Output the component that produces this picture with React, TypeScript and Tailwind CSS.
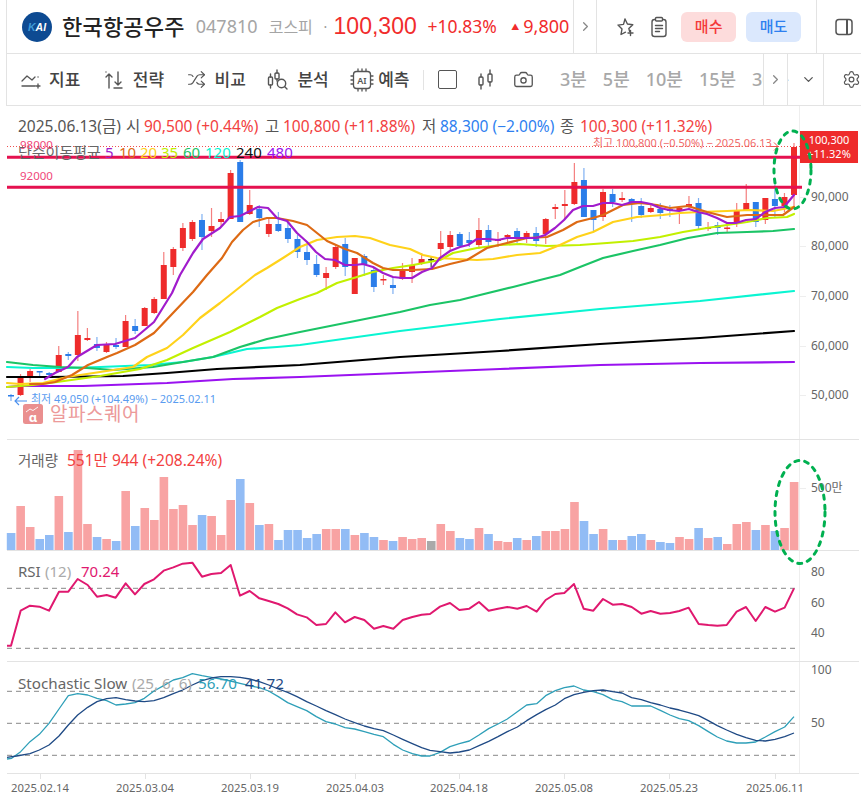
import { Shuffle, Camera, Settings, ChevronRight, ChevronDown } from "lucide-react";

const z = (s: string, ox: number, oy: number) =>
  s.trim().split(/\s+/).map((p) => { const [a, b] = p.split(",").map(Number); return `${ox + a / 3},${oy + b / 3}`; }).join(" ");

// bodyTop, bodyBottom, wickTop, wickBottom, colour
const candles: [number, number, number, number, number][] = [
  [395,396.5,394,401,1],[376,395,374,396,0],[371,378,369,382,0],[371,372.5,371,377,1],[373,375,372,378,1],[355,372,346,372,0],[354,356,352,360,1],[335,355,311,361,0],[338,340,328,341,0],[344,348,337,351,1],
  [344,352,342,353,0],[345,347,338,349,1],[321,347,315,347,0],[326,331,319,334,1],[308,326,307,326,0],[299,313,297,314,0],[265,299,252,299,0],[249,267,247,275,0],[228,248,223,251,0],[222,239,220,241,0],
  [220,237,214,250,1],[226,231,208,237,0],[219,222,212,227,0],[173,219,170,219,0],[162,222,160,222,1],[205,214,190,215,0],[209,218,205,227,1],[224,234,218,237,0],[224,231,212,232,1],[228,239,222,243,1],
  [239,252,235,258,1],[252,260,245,265,1],[264,275,255,277,1],[273,278,267,290,0],[247,267,245,269,0],[244,267,238,276,1],[258,294,258,294,0],[256,264,254,276,1],[270,287,267,292,1],[279,280.5,275,285,0],
  [285,288,277,294,1],[271,279,263,280,0],[265,272,258,283,0],[259,263,253,265,0],[259,260,256,267,2],[243,249,231,258,0],[235,247,231,250,0],[234,246,232,246,1],[240,243,232,247,1],[230,245,218,249,0],
  [230,242,225,247,1],[239,241,232,247,0],[235,237,234,243,0],[231,238,228,243,1],[233,239,231,243,0],[233,241,227,247,1],[219,234,218,244,0],[207,209,204,219,0],[204,206,190,219,0],[182,204,163,205,0],
  [180,217,168,217,1],[210,220,210,232,1],[192,217,189,221,0],[194,202,189,207,1],[198,200,192,202,0],[199,204,198,222,1],[206,215,198,218,1],[208,212,205,213,0],[209,213,203,219,1],[209,211,205,217,1],
  [208,210,206,224,0],[204,206,196,208,0],[203,226,198,229,1],[227.5,229,222,231,0],[225,228,222,235,1],[227.5,229,222,232,0],[211,222,203,227,0],[203,210,184,211,0],[202,222,202,227,1],[198,220,198,224,0],
  [199,206,185,217,1],[197,206,193,212,0],[147,195,143,207,0],
];
const colr = ["#ee2b2b", "#2b7de9", "#222222"];
const wick = ["#f47f7f", "#7fb0f2", "#444444"];
const vcol = ["#f8a3a3", "#92bcf5", "#a9a9a9"];

const vols: [number, number][] = [
  [279,1],[198,0],[261,0],[297,1],[285,1],[168,0],[276,1],[30,0],[252,0],[291,1],[297,0],[303,1],[153,0],[258,1],[204,0],[240,0],[111,0],[207,0],[195,0],[255,0],[225,1],[228,0],[285,0],[180,0],[117,1],[189,0],[255,1],[252,0],[300,1],[270,1],[270,1],[294,1],[282,1],[267,0],[267,0],[267,1],[285,0],[279,1],[291,1],[300,0],[303,1],[291,0],[297,0],[294,0],[303,2],
  [252,0],[273,0],[294,1],[297,1],[264,0],[282,1],[303,0],[306,0],[294,1],[300,0],[288,1],[273,0],[273,0],[267,0],[186,0],[243,1],[282,1],[267,0],[300,1],[300,0],[288,1],[282,1],[300,0],[306,1],[309,1],[291,0],[297,0],[264,1],[294,0],[291,1],[312,0],[252,0],[246,0],[270,1],[255,0],[273,1],[264,0],[126,0],
];
const cx = (i: number) => 11 + (783 / 82) * i;

const ma5 = "45,379 55,373 68,367 77,357 97,345 115,344 135,338 154,322 172,293 180,275 193,253 203,239 220,228 230,217 240,216 250,211 258,207 268,208 277,218 287,221 297,233 307,242 316,252 325,259 335,260 345,265 355,265 363,264 373,267 383,273 393,277 402,278 412,278 422,272 432,268 440,258 450,251 460,247 468,245 477,239 488,239 498,240 507,238 517,238 527,238 536,238 545,235 555,228 564,220 573,210 583,206 593,206 603,203 613,203 622,205 632,202 641,202 651,204 660,208 669,210 679,211 689,209 698,212 707,214 717,218 727,223 736,223 746,220 756,219 765,212 775,208 784,207 794,195";
const ma10 = "30,384 43,384 55,382 72,375 88,365 107,357 117,353 135,345 154,333 173,313 193,292 207,275 222,258 232,242 243,230 253,222 267,218 277,218 293,221 307,225 317,233 327,241 345,249 357,253 373,263 383,268 393,270 412,270 432,269 450,264 467,260 487,248 507,243 527,238 547,237 563,230 577,222 593,218 603,215 623,205 640,203 657,205 670,208 688,206 707,212 727,217 747,215 763,215 783,215 794,207";
const ma20 = "7,383 20,384 43,383 67,377 100,372 133,367 147,357 167,348 183,335 200,318 220,303 240,287 255,275 267,268 283,258 300,247 317,240 337,237 355,236 370,238 390,245 410,249 423,255 437,258 457,259 477,260 493,259 517,255 540,253 560,245 577,237 593,232 613,222 637,217 663,215 680,213 700,212 727,211 750,210 773,211 794,207";
const ma35 = "7,387 33,385 57,382 100,376 140,369 167,360 193,348 230,332 260,317 277,308 300,299 317,293 337,283 357,277 373,272 393,268 413,265 440,260 453,253 477,248 500,245 520,244 547,246 580,245 607,243 633,241 660,237 683,232 707,228 727,225 747,222 767,218 787,217 794,214";
const ma60 = "7,362 33,365 60,367 87,368 113,370 153,367 183,362 213,357 240,347 267,339 300,332 350,322 400,312 430,305 460,300 480,295 513,287 540,280 560,275 580,267 603,258 633,251 660,245 688,238 717,233 747,232 773,231 794,229";
const ma120 = "7,367 33,368 67,368 100,367 150,365 183,362 213,357 247,349 277,347 300,345 400,331 500,319 600,309 700,301 794,291";
const ma240 = "7,377 50,377 123,376 167,373 217,369 300,365 400,357 500,351 600,344 700,338 794,331";
const ma480 = "7,387 20,386 83,386 167,383 233,379 300,377 400,373 500,369 600,365 700,363 794,362";

const rsi = z("21,272 33,272 62,167 90,152 118,155 147,167 177,110 205,110 233,72 263,90 291,125 320,120 347,128 377,85 405,118 433,87 462,73 491,47 520,37 548,26 577,23 606,65 634,57 663,54 692,30 720,122 749,108 778,130 806,138 835,147 863,160 891,178 920,187 949,210 978,207 1006,172 1035,202 1064,186 1093,195 1122,221 1150,213 1180,221 1208,195 1237,186 1265,179 1290,177", 0, 555) + " " +
  z("30,155 60,144 88,165 118,161 147,141 176,167 204,161 232,156 262,161 290,153 320,170 347,135 376,117 403,114 432,87 461,161 490,167 519,132 548,149 576,147 605,156 634,176 662,168 691,176 720,174 748,168 776,158 806,207 835,210 862,212 890,210 920,170 948,156 977,198 1006,156 1035,170 1064,158 1092,100", 430, 555);
const stK = z("21,612 35,610 62,590 90,560 118,538 147,505 177,462 205,422 233,416 263,420 291,430 320,437 348,450 377,447 405,443 433,430 462,408 491,392 520,375 548,368 577,356 606,362 634,367 663,372 692,378 720,385 749,392 778,398 806,408 835,425 863,443 891,455 920,467 949,485 978,500 1006,507 1035,518 1064,522 1093,530 1122,538 1150,545 1180,568 1208,585 1237,596 1265,603 1290,603", 0, 555) + " " +
  z("30,592 60,575 88,566 118,558 147,540 176,521 204,507 232,492 262,470 290,450 320,446 347,422 376,407 403,398 432,393 461,405 490,410 519,419 548,434 576,440 605,453 634,453 662,453 691,466 720,480 748,491 776,497 806,512 835,530 862,546 890,558 920,564 948,564 977,561 1006,546 1035,530 1064,516 1092,485", 430, 555);
const stD = z("21,607 50,603 90,596 118,585 147,570 177,543 205,510 233,480 263,457 291,440 320,431 348,428 377,434 405,438 433,440 462,437 491,428 520,416 548,405 577,390 606,377 634,369 663,365 692,365 720,367 749,372 778,380 806,390 835,402 863,412 891,425 920,440 949,453 978,467 1006,479 1035,492 1064,503 1093,513 1122,521 1150,527 1180,540 1208,553 1237,566 1265,578 1290,586", 0, 555) + " " +
  z("30,590 60,594 88,591 118,585 147,572 176,559 204,545 232,530 262,516 290,497 320,479 347,464 376,450 403,431 432,419 461,412 490,407 519,405 548,410 576,414 605,428 634,434 662,443 691,450 720,459 748,465 776,473 806,482 835,497 862,512 890,525 920,538 948,548 977,556 1006,558 1035,553 1064,545 1092,534", 430, 555);

const dates = [["2025.02.14", 40], ["2025.03.04", 145], ["2025.03.19", 250], ["2025.04.03", 355], ["2025.04.18", 459], ["2025.05.08", 564], ["2025.05.23", 669], ["2025.06.11", 775]] as const;

const Ic = "text-[#555] shrink-0";

function Tool({ icon, label, w }: { icon: React.ReactNode; label: string; w: string }) {
  return (
    <div className={`flex items-center ${w}`}>
      {icon}
      <span className="text-[17px] font-medium text-[#444] whitespace-nowrap">{label}</span>
    </div>
  );
}

function YLabel({ top, text }: { top: string; text: string }) {
  return (
    <div className={`absolute left-0 ${top} flex items-center`}>
      <span className="w-[6px] h-px bg-[#eeeeee]" />
      <span className="ml-[5px] text-[12px] leading-[14px] text-[#666] whitespace-nowrap">{text}</span>
    </div>
  );
}

export default function App() {
  return (
    <div className="relative w-[861px] h-[797px] overflow-hidden bg-white flex flex-col font-['Noto_Sans','Noto_Sans_CJK_KR',sans-serif]">
      {/* header */}
      <div className="h-[54px] ml-[6px] border-l border-b border-[#e3e3e3] flex items-center shrink-0">
        <svg width="30" height="30" viewBox="0 0 30 30" className="ml-[15px] shrink-0">
          <circle cx="15" cy="15" r="15" fill="#0d4a92" />
          <text x="15" y="19" textAnchor="middle" fontSize="10.5" fontWeight="800" fontStyle="italic" fill="#fff" fontFamily="Liberation Sans"><tspan fill="#3f9bd8">K</tspan>AI</text>
        </svg>
        <span className="ml-[10px] w-[124px] text-[22px] font-medium text-[#222] whitespace-nowrap tracking-[0.2px]">한국항공우주</span>
        <span className="ml-[10px] w-[63px] text-[18px] text-[#a5a5a5]">047810</span>
        <span className="ml-[10px] w-[47px] text-[16px] text-[#a5a5a5] whitespace-nowrap">코스피</span>
        <span className="ml-[8px] w-[10px] text-[14px] text-[#999]">·</span>
        <span className="w-[84px] text-[23px] text-[#f12c2c] font-['Liberation_Sans',sans-serif] whitespace-nowrap">100,300</span>
        <span className="ml-[10px] w-[72px] text-[17.5px] text-[#f12c2c] whitespace-nowrap">+10.83%</span>
        <span className="ml-[12px] w-[12px] text-[8px] text-[#f12c2c]">▲</span>
        <span className="w-[50px] text-[18px] text-[#f12c2c]">9,800</span>
        <div className="w-[24px] h-[53px] border-x border-[#e3e3e3] flex items-center justify-center shrink-0">
          <ChevronRight size={15} className="text-[#888]" />
        </div>
        <svg width="20" height="20" viewBox="0 0 20 20" fill="none" stroke="#555" strokeWidth="1.4" strokeLinejoin="round" strokeLinecap="round" className="ml-[18px] shrink-0">
          <path d="M10 2l2.4 5 5.4.7-4 3.7.8 3M10.5 15.2L6 17.5l1-5.6-4-3.8 5.5-.7L10 2" />
          <path d="M15.5 13.5v5M13 16h5" />
        </svg>
        <svg width="18" height="22" viewBox="0 0 18 22" fill="none" stroke="#555" strokeWidth="1.4" strokeLinecap="round" className="ml-[15px] shrink-0">
          <rect x="2" y="3.5" width="14" height="17" rx="2.5" />
          <rect x="5.5" y="1.5" width="7" height="3.5" rx="1" fill="#fff" />
          <path d="M5.5 9.5h7M5.5 12.5h7M5.5 15.5h4" />
        </svg>
        <button className="ml-[13px] w-[55px] h-[30px] rounded-[6px] bg-[#fddcdc] text-[15px] font-medium text-[#f43a3a]">매수</button>
        <button className="ml-[10px] w-[55px] h-[30px] rounded-[6px] bg-[#dbe8fd] text-[15px] font-medium text-[#2e80f0]">매도</button>
        <div className="ml-[15px] w-[45px] h-[53px] border-l border-[#e3e3e3] flex items-center pl-[18px] shrink-0">
          <svg width="18" height="18" viewBox="0 0 18 18" fill="none" stroke="#555" strokeWidth="1.5">
            <rect x="1" y="1.5" width="16" height="15" rx="3" />
            <path d="M12 1.5v15" strokeWidth="2" />
          </svg>
        </div>
      </div>

      {/* toolbar */}
      <div className="h-[52px] ml-[6px] border-l border-b border-[#e3e3e3] flex items-center shrink-0 pl-[14px]">
        <Tool w="w-[83px]" label="지표" icon={
          <svg width="20" height="20" viewBox="0 0 20 20" fill="none" stroke="#555" strokeWidth="1.3" strokeLinecap="round" strokeLinejoin="round" className="mr-[8px] shrink-0">
            <path d="M1 11l5-5 5 4 3-3" /><path d="M1 16h13M17 14v4M15 16h4" /><path d="M17 7h.1" />
          </svg>} />
        <Tool w="w-[83px]" label="전략" icon={
          <svg width="20" height="20" viewBox="0 0 20 20" fill="none" stroke="#555" strokeWidth="1.4" strokeLinecap="round" strokeLinejoin="round" className="mr-[9px] shrink-0">
            <path d="M5 18V4M2 7l3-3 3 3M2 2h0" /><path d="M14 2v13M11 12l3 3 3-3M10 18h8" />
          </svg>} />
        <Tool w="w-[81px]" label="비교" icon={<Shuffle size={19} strokeWidth={1.5} className={`${Ic} mr-[9px]`} />} />
        <Tool w="w-[83px]" label="분석" icon={
          <svg width="22" height="22" viewBox="0 0 22 22" fill="none" stroke="#555" strokeWidth="1.4" strokeLinecap="round" className="mr-[8px] shrink-0">
            <rect x="1.5" y="8" width="4" height="8" rx="1" /><path d="M3.5 5v3M3.5 16v3" /><rect x="8" y="4" width="4" height="6" rx="1" /><path d="M10 1v3M10 10v2" />
            <circle cx="14.5" cy="14.5" r="4.2" /><path d="M17.5 17.5l2.5 2.5" />
          </svg>} />
        <Tool w="w-[73px]" label="예측" icon={
          <svg width="24" height="24" viewBox="0 0 24 24" fill="none" stroke="#555" strokeWidth="1.3" strokeLinecap="round" className="mr-[4px] shrink-0">
            <rect x="3.5" y="3.5" width="17" height="17" rx="3" />
            <path d="M1 8h2M1 12h2M1 16h2M21 8h2M21 12h2M21 16h2M8 1v2M12 1v2M16 1v2M8 21v2M12 21v2M16 21v2" />
            <text x="12" y="15.5" textAnchor="middle" fontSize="9" stroke="none" fill="#555" fontWeight="600">AI</text>
          </svg>} />
        <div className="w-px h-[20px] bg-[#e3e3e3] shrink-0" />
        <div className="ml-[14px] w-[19px] h-[19px] rounded-[2px] border-[1.5px] border-[#555] shrink-0" />
        <svg width="18" height="22" viewBox="0 0 18 22" fill="none" stroke="#555" strokeWidth="1.4" strokeLinecap="round" className="ml-[20px] shrink-0">
          <rect x="2" y="8" width="4" height="8" rx="1" /><path d="M4 5v3M4 16v4" /><rect x="11" y="5" width="4" height="8" rx="1" /><path d="M13 1v4M13 13v4" />
        </svg>
        <Camera size={21} strokeWidth={1.5} className={`${Ic} ml-[18px]`} />
        <div className="ml-[26px] w-[233px] h-[51px] overflow-hidden relative flex items-center gap-[16px] text-[18px] font-medium text-[#a8a8a8] whitespace-nowrap shrink-0">
          <span className="shrink-0">3분</span><span className="shrink-0">5분</span><span className="shrink-0">10분</span><span className="shrink-0">15분</span><span className="shrink-0">30분</span>
          <div className="absolute left-[203px] top-0 w-[25px] h-[51px] bg-white border-x border-[#e3e3e3] flex items-center justify-center">
            <ChevronRight size={15} className="text-[#888]" />
          </div>
        </div>
        <div className="w-[30px] flex justify-center shrink-0"><ChevronDown size={15} className="text-[#555]" /></div>
        <div className="h-[51px] pl-[18px] border-l border-[#e3e3e3] flex items-center shrink-0">
          <Settings size={19} strokeWidth={1.5} className="text-[#555]" />
        </div>
      </div>

      {/* main pane */}
      <div className="relative h-[334px] ml-[7px] mr-[2px] flex border-b border-[#e3e3e3] shrink-0">
        <div className="flex-1" />
        <div className="relative w-[60px] border-l border-[#eeeeee]">
          <YLabel top="top-[84px]" text="90,000" />
          <YLabel top="top-[133px]" text="80,000" />
          <YLabel top="top-[183px]" text="70,000" />
          <YLabel top="top-[233px]" text="60,000" />
          <YLabel top="top-[282px]" text="50,000" />
        </div>
        <svg width="861" height="334" viewBox="0 106 861 334" fill="none" className="absolute -left-[7px] top-0">
          <path d="M7 146.5H800" stroke="#f05050" strokeDasharray="1 2" />
          {candles.map((c, i) => (
            <g key={i}>
              <line x1={cx(i)} x2={cx(i)} y1={c[2]} y2={c[3]} stroke={wick[c[4]]} strokeWidth="1.2" />
              <rect x={cx(i) - 3} y={c[0]} width="6" height={Math.max(c[1] - c[0], 1.5)} fill={colr[c[4]]} />
            </g>
          ))}
          <g strokeLinejoin="round" strokeLinecap="round" strokeWidth="2.2">
            <polyline points={ma480} stroke="#9a12f0" />
            <polyline points={ma240} stroke="#000000" />
            <polyline points={ma120} stroke="#0af5d2" />
            <polyline points={ma60} stroke="#1bc466" />
            <polyline points={ma35} stroke="#c2f000" />
            <polyline points={ma20} stroke="#ffd21a" />
            <polyline points={ma10} stroke="#dd6a14" />
            <polyline points={ma5} stroke="#a11ccc" />
          </g>
          <path d="M7 157.3H802M7 187.3H802" stroke="#e5114f" strokeWidth="3" />
          <path d="M768 146.5h10M774 142.5l4 4-4 4" stroke="#f05050" strokeWidth="1" />
          <path d="M27 401H15M19 397l-4 4 4 4" stroke="#4a90ee" strokeWidth="1.1" />
          <g>
            <rect x="23" y="404" width="20" height="20" rx="2.5" fill="#ea8f8f" />
            <path d="M26 412l4-3 3 1.5 5-3.5" stroke="#fff" strokeWidth="0.9" />
            <text x="33" y="422" textAnchor="middle" fontSize="13" fontWeight="700" fill="#fff" stroke="none">α</text>
          </g>
        </svg>
        {/* legends */}
        <div className="absolute left-[11px] top-[9px] flex text-[15.5px] leading-[22px] whitespace-nowrap text-[#555]">
          <span className="w-[108px]">2025.06.13(금)</span>
          <span className="w-[18px]">시</span>
          <span className="w-[121px] text-[#f24141]">90,500 (+0.44%)</span>
          <span className="w-[18px]">고</span>
          <span className="w-[139px] text-[#f24141]">100,800 (+11.88%)</span>
          <span className="w-[18px]">저</span>
          <span className="w-[120px] text-[#2e7ff0]">88,300 (−2.00%)</span>
          <span className="w-[20px]">종</span>
          <span className="text-[#f24141]">100,300 (+11.32%)</span>
        </div>
        <div className="absolute left-[11px] top-[36px] flex text-[15px] leading-[20px] whitespace-nowrap">
          <span className="w-[87px] text-[#666]">단순이동평균</span>
          <span className="w-[14px] text-[#a11ccc]">5</span>
          <span className="w-[21px] text-[#dd6a14]">10</span>
          <span className="w-[21px] text-[#ffd21a]">20</span>
          <span className="w-[22px] text-[#c2f000]">35</span>
          <span className="w-[22px] text-[#1bc466]">60</span>
          <span className="w-[31px] text-[#0af5d2]">120</span>
          <span className="w-[31px] text-[#111]">240</span>
          <span className="text-[#9a12f0]">480</span>
        </div>
        <span className="absolute left-[13px] top-[32px] text-[11.5px] leading-[14px] text-[#f0487a]">98000</span>
        <span className="absolute left-[13px] top-[63px] text-[11.5px] leading-[14px] text-[#f0487a]">92000</span>
        <span className="absolute left-[586px] top-[30px] text-[11px] leading-[14px] text-[#f06a6a] whitespace-nowrap">최고 100,800 (−0.50%) − 2025.06.13</span>
        <span className="absolute left-[24px] top-[286px] text-[11px] leading-[14px] text-[#5a9cf0] whitespace-nowrap">최저 49,050 (+104.49%) − 2025.02.11</span>
        <span className="absolute left-[43px] top-[296px] text-[19px] leading-[24px] text-[#ec9a9a] whitespace-nowrap tracking-[0.5px]">알파스퀘어</span>
        <div className="absolute left-[793px] top-[25px] w-[58px] h-[32px] bg-[#ee2b2b] text-white text-[11px] leading-[14px] text-center flex flex-col justify-center">
          <span>100,300</span><span>+11.32%</span>
        </div>
      </div>

      {/* volume pane */}
      <div className="relative h-[111px] ml-[7px] mr-[2px] flex border-b border-[#e3e3e3] shrink-0">
        <div className="flex-1" />
        <div className="relative w-[60px] border-l border-[#eeeeee]">
          <YLabel top="top-[41px]" text="500만" />
        </div>
        <svg width="861" height="111" viewBox="0 440 861 111" className="absolute -left-[7px] top-0">
          {vols.map((v, i) => {
            const y = 440 + v[0] / 3;
            return <rect key={i} x={cx(i) - 4.2} y={y} width="8.6" height={550 - y} fill={vcol[v[1]]} />;
          })}
        </svg>
        <div className="absolute left-[11px] top-[9px] flex text-[15.5px] leading-[22px] whitespace-nowrap text-[#666]">
          <span className="w-[49px] text-[14.5px]">거래량</span>
          <span className="text-[#f24141]">551만 944 (+208.24%)</span>
        </div>
      </div>

      {/* RSI pane */}
      <div className="relative h-[111px] ml-[7px] mr-[2px] flex border-b border-[#e3e3e3] shrink-0">
        <div className="flex-1" />
        <div className="relative w-[60px] border-l border-[#eeeeee]">
          <span className="absolute left-[11px] top-[14px] text-[12px] leading-[14px] text-[#666]">80</span>
          <span className="absolute left-[11px] top-[45px] text-[12px] leading-[14px] text-[#666]">60</span>
          <span className="absolute left-[11px] top-[75px] text-[12px] leading-[14px] text-[#666]">40</span>
        </div>
        <svg width="861" height="111" viewBox="0 551 861 111" fill="none" className="absolute -left-[7px] top-0">
          <path d="M7 588.3H799M7 648.3H799" stroke="#888" strokeDasharray="5 4" />
          <polyline points={rsi} stroke="#e0186f" strokeWidth="2" strokeLinejoin="round" />
        </svg>
        <div className="absolute left-[11px] top-[9px] flex text-[15px] leading-[22px] whitespace-nowrap text-[#666]">
          <span className="w-[27px]">RSI</span>
          <span className="w-[36px] text-[#aaaaaa]">(12)</span>
          <span className="text-[#e0186f]">70.24</span>
        </div>
      </div>

      {/* Stochastic pane */}
      <div className="relative h-[112px] ml-[7px] mr-[2px] flex border-b border-[#e3e3e3] shrink-0">
        <div className="flex-1" />
        <div className="relative w-[60px] border-l border-[#eeeeee]">
          <span className="absolute left-[11px] top-[1px] text-[12px] leading-[14px] text-[#666]">100</span>
          <span className="absolute left-[11px] top-[54px] text-[12px] leading-[14px] text-[#666]">50</span>
        </div>
        <svg width="861" height="112" viewBox="0 662 861 112" fill="none" className="absolute -left-[7px] top-0">
          <path d="M7 691.3H799M7 723.3H799M7 755.3H799" stroke="#888" strokeDasharray="5 4" />
          <polyline points={stK} stroke="#2e9fb8" strokeWidth="1.3" strokeLinejoin="round" />
          <polyline points={stD} stroke="#1f4a85" strokeWidth="1.3" strokeLinejoin="round" />
        </svg>
        <div className="absolute left-[11px] top-[10px] flex text-[15.2px] leading-[22px] whitespace-nowrap text-[#666]">
          <span className="w-[114px]">Stochastic Slow</span>
          <span className="w-[66px] text-[#aaaaaa]">(25, 6, 6)</span>
          <span className="w-[47px] text-[#2e9fb8]">56.70</span>
          <span className="text-[#1f4a85]">41.72</span>
        </div>
      </div>

      {/* date axis */}
      <div className="relative h-[23px]">
        {dates.map(([d, x]) => (
          <div key={d} className="absolute top-0 flex flex-col items-center w-[60px]" style={{ left: x - 30 }}>
            <span className="w-px h-[5px] bg-[#e3e3e3]" />
            <span className="mt-[2px] text-[11.3px] leading-[14px] text-[#666]">{d}</span>
          </div>
        ))}
      </div>

      {/* hand-drawn ellipses over the chart */}
      <svg width="861" height="797" fill="none" className="absolute left-0 top-0 pointer-events-none">
        <ellipse cx="792.5" cy="170" rx="18.5" ry="39" stroke="#00b050" strokeWidth="3" strokeLinecap="round" strokeDasharray="4 6" />
        <ellipse cx="800" cy="512" rx="25" ry="51.5" stroke="#00b050" strokeWidth="3" strokeLinecap="round" strokeDasharray="4 6" />
      </svg>
    </div>
  );
}
